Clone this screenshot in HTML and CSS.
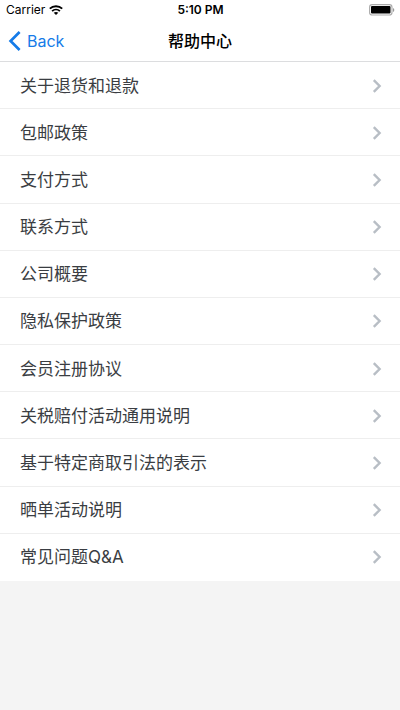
FILE: index.html
```html
<!DOCTYPE html>
<html lang="zh-CN">
<head>
<meta charset="utf-8">
<meta name="viewport" content="width=device-width, initial-scale=1">
<title>帮助中心</title>
<link rel="stylesheet" href="styles.css">
</head>
<body>
<svg class="defs" aria-hidden="true">
  <symbol id="chevron" viewBox="0 0 10 14"><path d="M1.8 1.2 7.6 7 1.8 12.8" fill="none" stroke="currentColor" stroke-width="2.4"/></symbol>
</svg>
<div class="status">
  <div class="carrier">
    <span>Carrier</span>
    <svg width="14" height="10" viewBox="0 0 14 10" aria-hidden="true">
      <path d="M.8 3.6C4.2.4 9.8.4 13.2 3.6M3.1 6.1C5.3 4.1 8.7 4.1 10.9 6.1" fill="none" stroke="#000" stroke-width="1.9"/>
      <path d="M4.7 7.8C6 6.7 8 6.7 9.3 7.8L7 10Z"/>
    </svg>
  </div>
  <time class="clock">5:10 PM</time>
  <svg class="battery" width="26" height="12" viewBox="0 0 26 12" aria-hidden="true">
    <rect x=".6" y=".6" width="22.4" height="10.4" rx="2.6" fill="#fff" stroke="#aaa" stroke-width="1.1"/>
    <rect x="2" y="2" width="19.5" height="7.6" rx="1"/>
    <path d="M24 4v4q1.3-.6 1.3-2T24 4Z" fill="#999"/>
  </svg>
</div>
<header class="nav">
  <a class="back" href="#">
    <svg width="13" height="20" viewBox="0 0 13 20" aria-hidden="true"><path d="M11.6 1 2.6 10l9 9" fill="none" stroke="currentColor" stroke-width="2.7"/></svg>
    <span>Back</span>
  </a>
  <h1 class="title">帮助中心</h1>
</header>
<main>
  <ul class="list">
    <li><a class="row" href="#"><span>关于退货和退款</span><svg class="chevron" aria-hidden="true"><use href="#chevron"/></svg></a></li>
    <li><a class="row" href="#"><span>包邮政策</span><svg class="chevron" aria-hidden="true"><use href="#chevron"/></svg></a></li>
    <li><a class="row" href="#"><span>支付方式</span><svg class="chevron" aria-hidden="true"><use href="#chevron"/></svg></a></li>
    <li><a class="row" href="#"><span>联系方式</span><svg class="chevron" aria-hidden="true"><use href="#chevron"/></svg></a></li>
    <li><a class="row" href="#"><span>公司概要</span><svg class="chevron" aria-hidden="true"><use href="#chevron"/></svg></a></li>
    <li><a class="row" href="#"><span>隐私保护政策</span><svg class="chevron" aria-hidden="true"><use href="#chevron"/></svg></a></li>
    <li><a class="row" href="#"><span>会员注册协议</span><svg class="chevron" aria-hidden="true"><use href="#chevron"/></svg></a></li>
    <li><a class="row" href="#"><span>关税赔付活动通用说明</span><svg class="chevron" aria-hidden="true"><use href="#chevron"/></svg></a></li>
    <li><a class="row" href="#"><span>基于特定商取引法的表示</span><svg class="chevron" aria-hidden="true"><use href="#chevron"/></svg></a></li>
    <li><a class="row" href="#"><span>晒单活动说明</span><svg class="chevron" aria-hidden="true"><use href="#chevron"/></svg></a></li>
    <li><a class="row" href="#"><span>常见问题Q&amp;A</span><svg class="chevron" aria-hidden="true"><use href="#chevron"/></svg></a></li>
  </ul>
</main>
</body>
</html>
```
FILE: styles.css
```css
* { box-sizing: border-box; }

body {
  margin: 0;
  background: #f4f4f4;
  color: #3a3d42;
  font-family: Inter, "Noto Sans CJK SC", sans-serif;
}

a { color: inherit; text-decoration: none; }

.defs { position: absolute; width: 0; height: 0; }

.status,
.nav {
  display: grid;
  grid-template-columns: 1fr auto 1fr;
  align-items: center;
  background: #fff;
  color: #000;
}

.status {
  height: 20px;
  padding: 0 5px 0 6px;
  font-size: 12px;
  line-height: 20px;
}

.carrier { display: flex; align-items: center; gap: 4px; }

.clock { font-weight: 600; }

.battery { justify-self: end; }

.nav {
  height: 42px;
  padding: 0 8px;
  border-bottom: 1px solid #dcdddf;
}

.back {
  display: flex;
  align-items: center;
  gap: 6px;
  color: #157be8;
  font-size: 16px;
}

.title {
  margin: 0;
  font-size: 16px;
  font-weight: 500;
  line-height: 24px;
}

.list {
  display: grid;
  grid-auto-rows: 1fr;
  min-height: 519px;
  margin: 0;
  padding: 0;
  list-style: none;
  background: #fff;
}

.list li { display: grid; border-bottom: 1px solid #eee; }

.list li:last-child { border-bottom-color: transparent; }

.row {
  display: flex;
  align-items: center;
  justify-content: space-between;
  padding: 1px 18px 0 20px;
  font-size: 17px;
  line-height: 24px;
}

.chevron { width: 10px; height: 14px; color: #b8bec5; }
```
